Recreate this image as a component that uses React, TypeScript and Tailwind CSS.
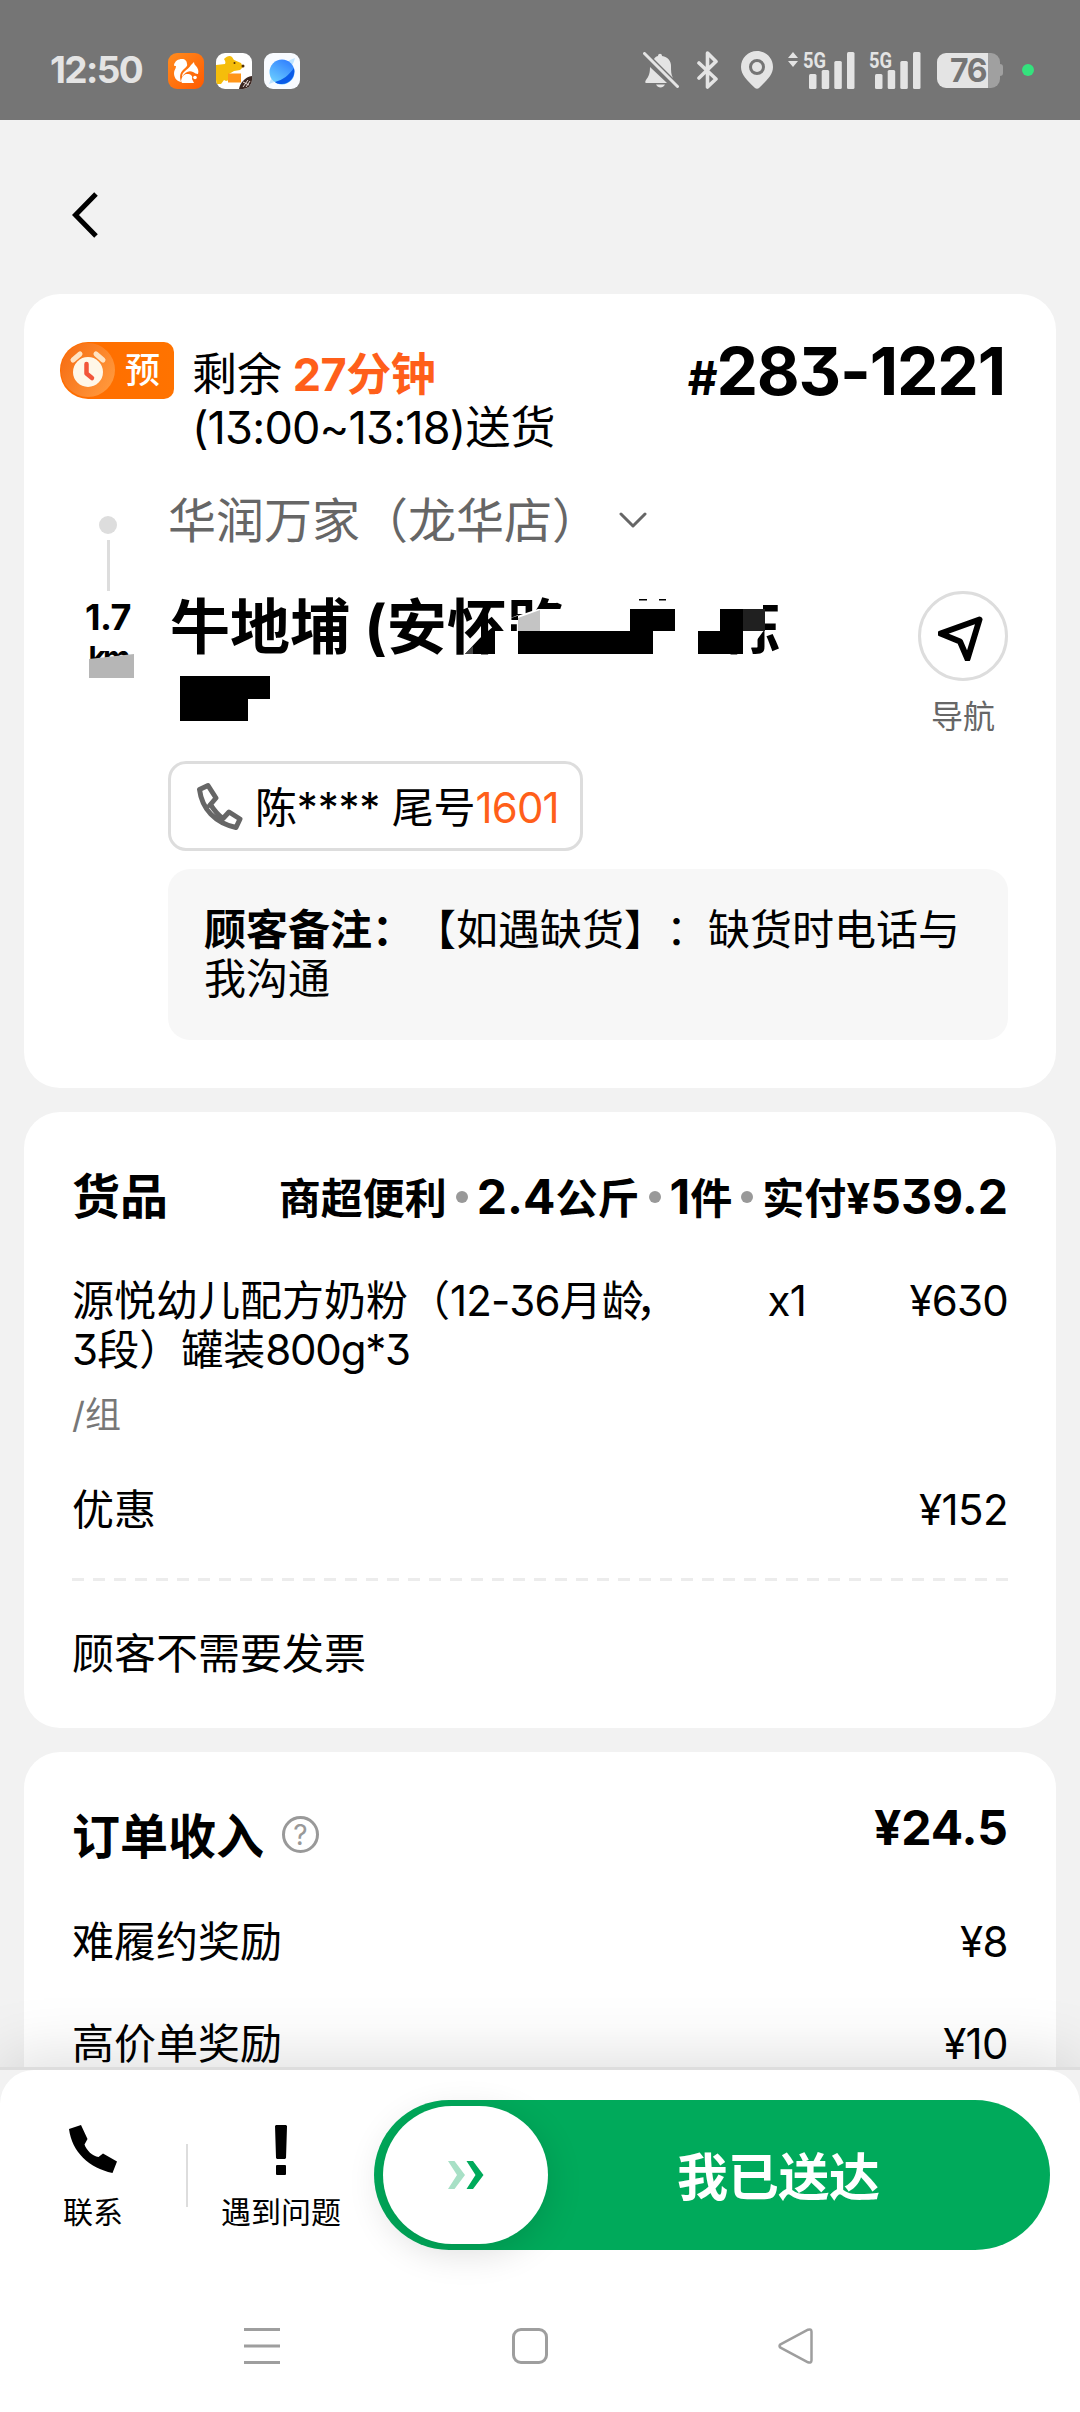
import type { ReactNode } from "react";

const apps = {
  squirrel: (
    <svg viewBox="0 0 36 36" className="w-9 h-9">
      <defs>
        <linearGradient id="uc" x1="0" y1="0" x2="1" y2="1">
          <stop offset="0" stopColor="#ff8c1f" />
          <stop offset="1" stopColor="#ff5a00" />
        </linearGradient>
      </defs>
      <rect width="36" height="36" rx="9" fill="url(#uc)" />
      <path
        d="M6 12c1-4 4-6 8-6 3 0 5 2 5 5 1 2-2 4-4 6-4 4-3 8-2 12-5-1-7-5-7-9 0-3 2-4 2-7-1 0-2 0-2-1z"
        fill="#fff"
      />
      <path d="M14 24c0-6 6-7 9-12l3-3c0 2 1 3 2 4 2 2 3 5 2 8-2 0-3-1-5-2-4-2-8 0-11 5z" fill="#fff" />
      <path d="M13 28c1-5 3-7 6-7 4 0 6 2 5 5l2 4H14z" fill="#fff" />
      <circle cx="27" cy="24.500" r="1.800" fill="#fff" />
    </svg>
  ),
  kangaroo: (
    <svg viewBox="0 0 36 36" className="w-9 h-9">
      <defs>
        <clipPath id="mt">
          <rect width="36" height="36" rx="9" />
        </clipPath>
      </defs>
      <g clipPath="url(#mt)">
        <rect width="36" height="36" fill="#fff" />
        <path
          d="M0 12l9-1c1-2 0-3-1-5 3-3 6-4 8-2l2 3 7 3 2 4-3 3-6 1-5 3v6l-3 1-2-1-3 4H0z"
          fill="#f5bd0b"
        />
        <circle cx="18.500" cy="10" r="1" fill="#50300a" />
        <circle cx="27" cy="13" r="1.500" fill="#50300a" />
        <rect x="12" y="20.500" width="13" height="9" fill="#ff9518" />
        <path d="M23 36c1-6 6-12 13-13v13z" fill="#3b2722" />
        <path d="M27 34l5-7M30 34l4-6M27 29l6 3" stroke="#e9dcd6" strokeWidth="1" />
      </g>
    </svg>
  ),
  planet: (
    <svg viewBox="0 0 36 36" className="w-9 h-9">
      <defs>
        <linearGradient id="pl" x1="0.800" y1="0" x2="0.200" y2="1">
          <stop offset="0" stopColor="#2f7dff" />
          <stop offset="1" stopColor="#6ed2ff" />
        </linearGradient>
      </defs>
      <rect width="36" height="36" rx="9" fill="#f8fbff" />
      <path d="M5 31c3-10 14-22 26-26-2 10-13 22-26 26z" fill="#bfe4ff" />
      <circle cx="18" cy="19" r="12.500" fill="url(#pl)" />
      <path d="M30 15c2 9-5 17-14 16-2 0-4-1-5-2 8-2 14-7 19-14z" fill="#0a5be8" />
    </svg>
  ),
};

function Signal({ arrows }: { arrows?: boolean }) {
  return (
    <svg viewBox="0 0 68 38" className="w-[68px] h-[38px] overflow-visible" fill="#e4e4e4">
      {arrows && <path d="M6 1l5 6H1zM6 16l5-6H1z" />}
      <text
        x="16"
        y="17"
        textLength="23"
        lengthAdjust="spacingAndGlyphs"
        fontSize="22"
        fontWeight="700"
        fontFamily="Roboto, sans-serif"
      >
        5G
      </text>
      <rect x="22" y="23" width="7.500" height="15" rx="1.500" />
      <rect x="34.700" y="19" width="7.500" height="19" rx="1.500" />
      <rect x="47.300" y="10" width="7.500" height="28" rx="1.500" />
      <rect x="60" y="1" width="7.500" height="37" rx="1.500" />
    </svg>
  );
}

function StatusBar() {
  return (
    <header className="flex items-center h-[120px] shrink-0 pt-[20px] pl-[50px] bg-[#757575] text-[#e4e4e4]">
      <span className="w-[118px] text-[37px] leading-[40px] font-bold tracking-[-1.6px]">12:50</span>
      <div className="flex gap-3 pt-0.5">
        {apps.squirrel}
        {apps.kangaroo}
        {apps.planet}
      </div>

      <div className="flex items-center ml-[343px]">
        {/* Muted bell */}
        <svg viewBox="0 0 36 36" className="w-9 h-9" fill="#e4e4e4">
          <path d="M7 15l17 16H3c-1 0-1-2 0-3 3-4 4-7 4-13zM11 7c1-2 3-3 4-3 0-3 4-3 4 0 6 1 9 5 9 10 0 5 0 9 2 12z" />
          <path d="M13 32.500h9c-2 4-7 4-9 0z" />
          <path d="M1.500 1.500l33 33" stroke="#e4e4e4" strokeWidth="3" strokeLinecap="round" />
        </svg>
        {/* Bluetooth */}
        <svg viewBox="0 0 22 38" className="w-[22px] h-[38px] ml-[18px]" fill="none" stroke="#e4e4e4" strokeWidth="3.600" strokeLinejoin="round" strokeLinecap="round">
          <path d="M2 12l17 16-8.500 8V2l8.500 8.500L2 27" />
        </svg>
        {/* Location */}
        <svg viewBox="0 0 32 38" className="w-8 h-[38px] ml-[22px]" fill="#e4e4e4">
          <path
            fillRule="evenodd"
            d="M16 0c9 0 16 7 16 16 0 8-6 13-14 21-1 1-3 1-4 0C6 29 0 24 0 16 0 7 7 0 16 0zm0 8a8 8 0 100 16 8 8 0 000-16z"
          />
          <circle cx="16" cy="16" r="5" />
        </svg>
        <div className="ml-[14px]">
          <Signal arrows />
        </div>
        <div className="-ml-[2px]">
          <Signal />
        </div>
        {/* Battery */}
        <div className="flex items-center ml-[16px]">
          <div className="w-[51px] h-[35px] rounded-l-[9px] bg-[#e4e4e4] text-[#757575] text-right text-[32px] leading-[35px] font-bold tracking-[-1.5px] pr-[2px]">
            76
          </div>
          <div className="w-3 h-[35px] rounded-r-[9px] bg-[#a0a0a0]" />
          <div className="w-[3px] h-3 rounded-r bg-[#a0a0a0]" />
        </div>
        <div className="w-3 h-3 ml-[19px] rounded-full bg-[#34e27d]" />
      </div>
    </header>
  );
}

function ReserveBadge() {
  return (
    <div className="flex items-center w-[114px] h-[57px] mt-1 rounded-l-[28px] rounded-r-[10px] bg-linear-to-r from-[#ff6d00] to-[#ff7300] text-white">
      <svg viewBox="0 0 56 57" className="w-14 h-[57px]">
        <defs>
          <linearGradient id="bd" x1="0" y1="0" x2="1" y2="0.600">
            <stop offset="0" stopColor="#f56a10" />
            <stop offset="1" stopColor="#ff963a" />
          </linearGradient>
        </defs>
        <circle cx="28" cy="28" r="27" fill="url(#bd)" />
        <path d="M13 18l7-6M36 12l7 6" stroke="#ffe3c2" strokeWidth="5" strokeLinecap="round" />
        <circle cx="28" cy="30" r="15" fill="#fff7e8" />
        <path d="M26.500 22v9.500l5.500 4.500" stroke="#f2553a" strokeWidth="4.500" fill="none" strokeLinecap="round" strokeLinejoin="round" />
      </svg>
      <span className="ml-[9px] text-[35px] leading-[57px] font-medium">预</span>
    </div>
  );
}

function DeliveryCard() {
  return (
    <section className="h-[794px] shrink-0 rounded-[36px] bg-white pt-11 pl-9 pr-12">
      <div className="flex items-start">
        <ReserveBadge />
        <div className="ml-[18px] mt-[10px] text-[45px] leading-[53px]">
          <p>
            剩余 <span className="font-bold text-[#ff5f1a] tracking-[-0.5px] -ml-[2px]">27分钟</span>
          </p>
          <p>
            <span className="tracking-[-0.8px]">(13:00~13:18)</span>送货
          </p>
        </div>
        <p className="ml-auto mr-[3px] text-[66px] leading-[66px] font-bold tracking-[-1.2px] whitespace-nowrap">
          <span className="text-[46px]">#</span>283-1221
        </p>
      </div>

      <div className="flex gap-3 mt-[38px]">
        {/* Route line with distance */}
        <div className="flex flex-col items-center w-24 pt-6">
          <div className="w-[18px] h-[18px] rounded-full bg-[#ddd]" />
          <div className="w-[3px] h-[51px] mt-1.5 bg-[#ddd]" />
          <p className="mt-2 text-[36px] leading-9 font-bold tracking-[-0.5px]">1.7</p>
          <div className="relative mt-[7px] text-[30px] leading-[30px] font-bold tracking-[-3px]">
            km
            <svg viewBox="0 0 45 26" className="absolute top-[10px] left-0 w-[45px] h-[26px]">
              <path d="M0 7l45-5v24H0z" fill="#b6b6b6" />
            </svg>
          </div>
        </div>

        <div className="flex-1">
          <div className="flex items-center h-14 text-[48px] leading-[56px] text-[#666]">
            <span className="pt-0.5">华润万家（龙华店）</span>
            <svg viewBox="0 0 28 16" className="w-7 h-4 ml-[19px]" fill="none" stroke="#666" strokeWidth="3" strokeLinecap="round" strokeLinejoin="round">
              <path d="M2 2l12 12L26 2" />
            </svg>
          </div>

          <div className="flex justify-between h-[140px] mt-[43px]">
            <div className="relative pt-px pl-0.5 text-[60px] leading-[70px] font-bold whitespace-nowrap">
              牛地埔 (安怀路
              <span className="inline-block w-[154px]" />
              栋
              {/* Mosaic over the private part of the address */}
              <svg viewBox="0 0 640 140" className="absolute top-0 left-0 w-[640px] h-[140px]">
                <path d="M327 40h23v25h-23z" fill="#fff" />
                <path d="M340 28l30-10h42v47h-62V24z" fill="#fff" />
                <path d="M297 63l15-16 15-13v29z" />
                <path d="M297 63l8-8v8z" fill="#444" />
                <path d="M350 27l22-8v21h-22z" fill="#c4c4c4" />
                <path d="M350 40h135v23H350zM462 18h45v22h-45zM471 8h8v1.500h-8zM491 8h7v1.500h-7z" />
                <path d="M545 0h50v18h-50z" fill="#fff" />
                <path d="M575 40h16l6-2-14 19-8 6z" fill="#fff" />
                <path d="M552 18h23v22h-23zM530 40h45v23h-45z" />
                <path d="M575 18h22v22h-22z" fill="#202020" />
                <path d="M12 85h90v23H80v22H12z" />
              </svg>
            </div>
            <div className="flex flex-col items-center text-[#666] text-[32px] leading-[38px]">
              <div className="flex items-center justify-center w-[90px] h-[90px] shrink-0 rounded-full border-3 border-[#ddd]">
                <svg viewBox="0 0 50 50" className="w-[50px] h-[50px]" fill="none" stroke="#000" strokeWidth="6" strokeLinejoin="round">
                  <path d="M41.500 8.500L2.500 22.500 22 30.500 29.500 48z" />
                </svg>
              </div>
              <span className="mt-[17px]">导航</span>
            </div>
          </div>

          <div className="flex items-center w-[415px] h-[90px] mt-[30px] rounded-[18px] border-3 border-[#ddd] pl-[26px] text-[42px] whitespace-nowrap">
            <svg viewBox="0 0 46 48" className="w-[46px] h-12" fill="none" stroke="#666" strokeWidth="5" strokeLinejoin="round">
              <path d="M2.500 7.500l8.500-4 8 12.500-5.500 6.500C17 28 21 33 26 36.500l6-6.500 11 7-4 8.500C18 41 5 27 2.500 7.500z" />
              <path d="M13.500 22.500l-5 4M26 36.500l-5 2" strokeWidth="4" />
            </svg>
            <span className="ml-3 pt-[3px] tracking-[-0.2px]">陈**** 尾号</span>
            <span className="pt-[3px] tracking-[-0.8px] text-[#ff5f1a]">1601</span>
          </div>

          <div className="h-[171px] mt-[18px] rounded-[22px] bg-[#f7f7f7] pt-9 pl-9 text-[42px] leading-[49px]">
            <p className="w-[770px]">
              <b>顾客备注：</b>【如遇缺货】：缺货时电话与我沟通
            </p>
          </div>
        </div>
      </div>
    </section>
  );
}

function Dot() {
  return <i className="self-center w-3 h-3 mx-[9px] rounded-full bg-[#999]" />;
}

function GoodsCard() {
  return (
    <section className="h-[616px] shrink-0 rounded-[36px] bg-white pt-[57px] px-12 text-[42px] leading-[49px]">
      <div className="flex items-baseline h-14 leading-[56px] font-bold whitespace-nowrap">
        <h2 className="mr-auto text-[48px]">货品</h2>
        商超便利
        <Dot />
        <span className="text-[48px]">2.4</span>公斤
        <Dot />
        <span className="text-[48px]">1</span>件
        <Dot />
        实付<span>¥</span>
        <span className="text-[48px]">539.2</span>
      </div>

      <div className="flex mt-[51px] tracking-[-0.8px]">
        <p className="w-[622px]">
          <span className="tracking-normal">源悦幼儿配方奶粉（</span>12-36
          <span className="tracking-normal">月龄</span>
          <span className="-ml-2">，</span>
          <br />3<span className="tracking-normal">段）罐装</span>
          <span className="tracking-[-1.2px]">800g*3</span>
        </p>
        <span className="w-[112px] text-right">x1</span>
        <span className="ml-auto">¥630</span>
      </div>
      <p className="mt-5 text-[36px] leading-[42px] text-[#777]">/组</p>

      <Row label="优惠" className="mt-[49px]">¥152</Row>

      <svg viewBox="0 0 936 3" className="block w-[936px] h-[3px] mt-[44px]">
        <path d="M0 1.500h936" stroke="#ececec" strokeWidth="3" strokeDasharray="12 9" />
      </svg>
      <p className="mt-12">顾客不需要发票</p>
    </section>
  );
}

function Row({ label, className, children }: { label: string; className: string; children: ReactNode }) {
  return (
    <div className={`flex justify-between ${className}`}>
      <span>{label}</span>
      <span className="tracking-[-0.6px]">{children}</span>
    </div>
  );
}

function IncomeCard() {
  return (
    <section className="h-[600px] shrink-0 rounded-[36px] bg-white pt-12 px-12 text-[42px] leading-[49px]">
      <div className="flex items-start text-[48px] leading-[56px] font-bold">
        <h2 className="mt-[9px]">订单收入</h2>
        <span className="flex items-center justify-center w-[37px] h-[37px] mt-4 ml-[18px] rounded-full border-3 border-[#999] text-[#999] text-[28px] leading-none font-normal">
          ?
        </span>
        <span className="ml-auto">¥24.5</span>
      </div>
      <Row label="难履约奖励" className="mt-[52px]">¥8</Row>
      <Row label="高价单奖励" className="mt-[53px]">¥10</Row>
    </section>
  );
}

function BottomBar() {
  return (
    <footer className="relative h-[345px] shrink-0 border-t-3 border-[#ddd] bg-[#f2f2f2] shadow-[0_-10px_60px_rgba(0,0,0,0.13)]">
      <div className="h-full rounded-t-[34px] bg-white">
        <div className="flex items-start h-[210px] pt-[30px] text-[30px] leading-9">
          <div className="flex flex-col items-center w-[186px] pt-[25px]">
            <svg viewBox="0 0 48 48" className="w-12 h-12">
              <path d="M0 4L12 0l6.500 14-3 5.500c2 6 8 11.500 14 12.500l4.500-3.500L48 36.500 43.500 48C20 43 3 27 0 4z" />
            </svg>
            <span className="mt-[21px]">联系</span>
          </div>
          <div className="w-[2px] h-[63px] mt-[44px] bg-[#ddd]" />
          <div className="flex flex-col items-center w-[186px] pt-[25px]">
            <svg viewBox="0 0 14 50" className="w-[14px] h-[50px]">
              <path d="M2 0h10l1 1-1 32-1 1H3l-1-1L1 1z" />
              <rect x="2" y="40" width="10" height="10" rx="1" />
            </svg>
            <span className="mt-[19px]">遇到问题</span>
          </div>

          {/* Slide to confirm */}
          <div className="flex items-center w-[676px] h-[150px] rounded-full bg-[#00aa5b]">
            <div className="flex items-center justify-center w-[165px] h-[138px] ml-[9px] rounded-full bg-white shadow-[0_8px_36px_rgba(0,0,0,0.14)]">
              <svg viewBox="0 0 36 28" className="w-9 h-7">
                <path d="M0 0h6.500L17 14 6.500 28H0l9-14z" fill="#a8e0c6" />
                <path d="M18.500 0H25l10.500 14L25 28h-6.500l9-14z" fill="#00aa5b" />
              </svg>
            </div>
            <span className="ml-[129px] pt-1.5 text-[51px] leading-[60px] font-bold tracking-[-0.3px] text-white">我已送达</span>
          </div>
        </div>

        {/* System navigation */}
        <div className="flex h-[132px] pt-[47px]">
          <svg viewBox="0 0 36 38" className="w-9 h-[38px] ml-[244px]" stroke="#9e9e9e" strokeWidth="3">
            <path d="M0 2.500h36M0 19h36M0 35.500h36" />
          </svg>
          <div className="w-9 h-9 ml-[232px] mt-px rounded-[9px] border-3 border-[#9e9e9e]" />
          <svg viewBox="0 0 36 36" className="w-9 h-9 ml-[230px] mt-px" fill="none" stroke="#9e9e9e" strokeWidth="2.500" strokeLinejoin="round">
            <path d="M2.500 16.300Q.500 18 2.500 19.700L30 34.300q3.500 1 3.500-2v-28.600q0-3-3.500-2z" />
          </svg>
        </div>
      </div>
    </footer>
  );
}

export default function App() {
  return (
    <div className="flex flex-col w-[1080px] h-[2412px] overflow-hidden bg-[#f2f2f2] text-black font-[Inter,'Noto_Sans_CJK_SC',sans-serif] [font-feature-settings:'cv09'] [text-spacing-trim:space-all]">
      <StatusBar />
      <nav className="h-[174px] shrink-0 pt-[72px] pl-[70px]">
        <svg viewBox="0 0 30 46" className="w-[30px] h-[46px]" fill="none" stroke="#000" strokeWidth="5">
          <path d="M26 2L5.500 23 26 44" />
        </svg>
      </nav>
      <main className="flex flex-col gap-6 h-[1773px] shrink-0 overflow-hidden px-6">
        <DeliveryCard />
        <GoodsCard />
        <IncomeCard />
      </main>
      <BottomBar />
    </div>
  );
}
